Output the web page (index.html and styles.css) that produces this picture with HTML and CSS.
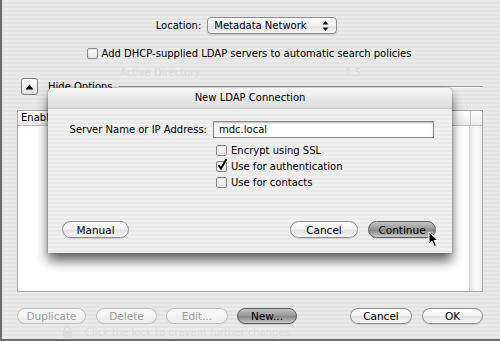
FILE: index.html
```html
<!DOCTYPE html>
<html lang="en">
<head>
    <meta charset="UTF-8">
    <title>Directory Access - New LDAP Connection</title>
    <link rel="stylesheet" href="styles.css">
</head>
<body>
    <div class="window">
        <!-- 位置选择 -->
        <div class="location-row">
            <span class="location-label">Location:</span>
            <div class="popup">
                <span>Metadata Network</span>
                <svg class="popup-arrows" width="7" height="12" viewBox="0 0 7 12">
                    <path d="M0.5 4.5 L3.5 1 L6.5 4.5 Z" fill="#111"/>
                    <path d="M0.5 7.5 L3.5 11 L6.5 7.5 Z" fill="#111"/>
                </svg>
            </div>
        </div>

        <div class="check-row dhcp-row">
            <span class="checkbox"></span>
            <span>Add DHCP-supplied LDAP servers to automatic search policies</span>
        </div>

        <div class="ghost-row">
            <span class="ghost-name">Active Directory</span>
            <span class="ghost-version">1.5</span>
        </div>

        <div class="options-row">
            <span class="disclosure">
                <svg width="9" height="6" viewBox="0 0 9 6"><path d="M0.5 5.5 L4.5 0.5 L8.5 5.5 Z" fill="#000"/></svg>
            </span>
            <span class="options-label">Hide Options</span>
            <span class="rule"></span>
        </div>

        <!-- 服务器列表 -->
        <div class="table">
            <div class="table-head">
                <span class="head-cell enable">Enable</span>
                <span class="head-cell corner"></span>
            </div>
            <div class="table-body">
                <div class="rows"></div>
                <div class="scrollbar"></div>
            </div>
        </div>

        <div class="bottom-bar">
            <div class="btn-group">
                <span class="btn disabled w-duplicate">Duplicate</span>
                <span class="btn disabled w-delete">Delete</span>
                <span class="btn disabled w-edit">Edit...</span>
                <span class="btn default w-new">New...</span>
            </div>
            <div class="btn-group">
                <span class="btn w-cancel">Cancel</span>
                <span class="btn w-ok">OK</span>
            </div>
        </div>

        <div class="lock-row">
            <svg width="11" height="12" viewBox="0 0 11 12">
                <path d="M2.5 5 V3.5 A3 3 0 0 1 8.5 3.5 V5" fill="none" stroke="#d9d9d9" stroke-width="1.5"/>
                <rect x="1" y="5" width="9" height="7" rx="1" fill="#dbdbdb"/>
            </svg>
            <span>Click the lock to prevent further changes.</span>
        </div>

        <!-- Sheet -->
        <div class="sheet">
            <div class="sheet-title">New LDAP Connection</div>
            <div class="sheet-form">
                <span class="field-label">Server Name or IP Address:</span>
                <div class="text-field">mdc.local</div>
                <div class="sheet-checks">
                    <div class="check-row"><span class="checkbox"></span><span>Encrypt using SSL</span></div>
                    <div class="check-row">
                        <span class="checkbox checked">
                            <svg width="12" height="13" viewBox="0 0 12 13"><path d="M2.5 7 L5 10.5 L10.5 1" fill="none" stroke="#000" stroke-width="2"/></svg>
                        </span>
                        <span>Use for authentication</span>
                    </div>
                    <div class="check-row"><span class="checkbox"></span><span>Use for contacts</span></div>
                </div>
            </div>
            <div class="sheet-buttons">
                <span class="btn w-manual">Manual</span>
                <span class="spacer"></span>
                <span class="btn w-sheet">Cancel</span>
                <span class="btn default w-sheet">Continue</span>
            </div>
        </div>

        <svg class="cursor" width="12" height="17" viewBox="0 0 12 17">
            <path d="M1 1 L1 13 L4 10.2 L6.3 15.5 L8.4 14.6 L6.2 9.5 L10 9.5 Z" fill="#000" stroke="#fff" stroke-width="1"/>
        </svg>
    </div>
</body>
</html>
```

FILE: styles.css
```css
/* 重置样式 */
html, body {
    margin: 0;
    padding: 0;
    width: 500px;
    height: 341px;
    overflow: hidden;
    font-family: "DejaVu Sans", "Liberation Sans", sans-serif;
    font-size: 10px;
    color: #000;
}

.window {
    position: relative;
    box-sizing: border-box;
    width: 500px;
    height: 341px;
    border-left: 2px solid #6c6c6c;
    border-bottom: 2px solid #6c6c6c;
    background: repeating-linear-gradient(to bottom, #eaeaea 0, #eaeaea 2px, #e3e3e3 2px, #e3e3e3 4px);
    display: flex;
    flex-direction: column;
}

/* 顶部 Location */
.location-row {
    padding-top: 17px;
    padding-right: 9px;
    height: 17px;
    display: flex;
    justify-content: center;
    align-items: center;
    gap: 6px;
}

.popup {
    box-sizing: border-box;
    width: 130px;
    height: 17px;
    padding: 0 7px 0 6px;
    display: flex;
    align-items: center;
    justify-content: space-between;
    border: 1px solid #8c8c8c;
    border-radius: 4px;
    background: linear-gradient(to bottom, #ffffff 0%, #f1f1f1 50%, #e2e2e2 51%, #f4f4f4 100%);
    box-shadow: 0 1px 1px rgba(0, 0, 0, 0.15);
}

.check-row {
    display: flex;
    align-items: center;
    gap: 4px;
}

.dhcp-row {
    margin-top: 13px;
    height: 13px;
    justify-content: center;
    padding-right: 4px;
}

.checkbox {
    box-sizing: border-box;
    position: relative;
    width: 11px;
    height: 11px;
    flex: none;
    border: 1px solid #8a8a8a;
    border-radius: 2px;
    background: linear-gradient(to bottom, #fdfdfd, #e4e4e4);
    box-shadow: inset 0 1px 1px rgba(0, 0, 0, 0.12);
}

.checkbox.checked svg {
    position: absolute;
    left: -1px;
    top: -4px;
}

/* 被遮住的内容 */
.ghost-row {
    margin-top: 7px;
    height: 10px;
    padding-left: 118px;
    display: flex;
    align-items: center;
    color: #d9d9d9;
}

.ghost-name {
    width: 225px;
}

.options-row {
    margin-top: 1px;
    height: 17px;
    padding-left: 19px;
    padding-right: 17px;
    display: flex;
    align-items: center;
}

.disclosure {
    box-sizing: border-box;
    width: 17px;
    height: 17px;
    display: flex;
    align-items: center;
    justify-content: center;
    border: 1px solid #7a7a7a;
    border-radius: 3px;
    background: linear-gradient(to bottom, #ffffff, #e0e0e0);
}

.options-label {
    margin-left: 10px;
}

.rule {
    flex: 1;
    margin-left: 6px;
    border-top: 1px solid #9c9c9c;
    border-bottom: 1px solid #f6f6f6;
}

/* 表格 */
.table {
    box-sizing: border-box;
    margin: 15px 17px 0 15px;
    height: 182px;
    border: 1px solid #a6a6a6;
    background: #fff;
    display: flex;
    flex-direction: column;
}

.table-head {
    height: 14px;
    display: flex;
    border-bottom: 1px solid #bdbdbd;
    background: linear-gradient(to bottom, #ffffff, #ebebeb);
}

.head-cell.enable {
    flex: 1;
    padding-left: 3px;
    line-height: 14px;
}

.head-cell.corner {
    width: 11px;
    border-left: 1px solid #c4c4c4;
}

.table-body {
    flex: 1;
    display: flex;
}

.rows {
    flex: 1;
}

.scrollbar {
    width: 12px;
    border-left: 1px solid #d0d0d0;
    background: linear-gradient(to right, #e6e6e6, #fbfbfb 50%, #ececec);
}

/* 按钮 */
.btn {
    box-sizing: border-box;
    height: 16px;
    display: inline-flex;
    align-items: center;
    justify-content: center;
    border: 1px solid #8e8e8e;
    border-radius: 9px;
    background: linear-gradient(to bottom, #ffffff 0%, #f3f3f3 45%, #e3e3e3 55%, #f7f7f7 100%);
    box-shadow: 0 1px 1px rgba(0, 0, 0, 0.12);
    font-size: 10.5px;
}

.btn.default {
    border-color: #5e5e5e;
    background: linear-gradient(to bottom, #c4c4c4 0%, #9a9a9a 45%, #888888 55%, #c9c9c9 100%);
}

.btn.disabled {
    border-color: #bdbdbd;
    color: #9c9c9c;
    background: linear-gradient(to bottom, #fafafa, #ececec);
    box-shadow: none;
}

.bottom-bar {
    margin-top: 16px;
    padding: 0 17px 0 15px;
    display: flex;
    justify-content: space-between;
}

.btn-group {
    display: flex;
    gap: 9px;
}

.w-duplicate { width: 69px; margin-right: 1px; }
.w-delete { width: 61px; }
.w-edit { width: 62px; }
.w-new { width: 60px; }
.w-cancel { width: 62px; margin-right: 1px; }
.w-ok { width: 61px; }

.lock-row {
    margin-top: 2px;
    height: 12px;
    padding-left: 60px;
    display: flex;
    align-items: center;
    gap: 12px;
    color: #dadada;
}

/* Sheet 样式 */
.sheet {
    position: absolute;
    left: 46px;
    top: 88px;
    width: 404px;
    height: 165px;
    display: flex;
    flex-direction: column;
    border-radius: 5px 5px 0 0;
    background: repeating-linear-gradient(to bottom, #f0f0f0 0, #f0f0f0 2px, #eaeaea 2px, #eaeaea 4px);
    box-shadow: 0 8px 12px rgba(0, 0, 0, 0.6), 0 0 3px rgba(0, 0, 0, 0.35);
}

.sheet-title {
    height: 20px;
    line-height: 20px;
    text-align: center;
    border-radius: 5px 5px 0 0;
    border-bottom: 1px solid #c6c6c6;
    background: linear-gradient(to bottom, #f7f7f7, #dcdcdc);
}

.sheet-form {
    margin-top: 12px;
    display: grid;
    grid-template-columns: 159px 221px;
    column-gap: 6px;
    align-items: center;
}

.field-label {
    text-align: right;
}

.text-field {
    box-sizing: border-box;
    height: 17px;
    padding-left: 5px;
    display: flex;
    align-items: center;
    background: #fff;
    border: 1px solid #8c8c8c;
    box-shadow: inset 0 1px 2px rgba(0, 0, 0, 0.3);
}

.sheet-checks {
    grid-column: 2;
    margin-top: 4px;
    padding-left: 3px;
}

.sheet-checks .check-row {
    height: 16px;
}

.sheet-buttons {
    margin-top: auto;
    padding: 0 16px 15px 14px;
    display: flex;
    gap: 10px;
}

.sheet-buttons .btn {
    height: 17px;
}

.spacer {
    flex: 1;
}

.w-manual { width: 67px; }
.w-sheet { width: 68px; }

.cursor {
    position: absolute;
    left: 426px;
    top: 231px;
}
```
